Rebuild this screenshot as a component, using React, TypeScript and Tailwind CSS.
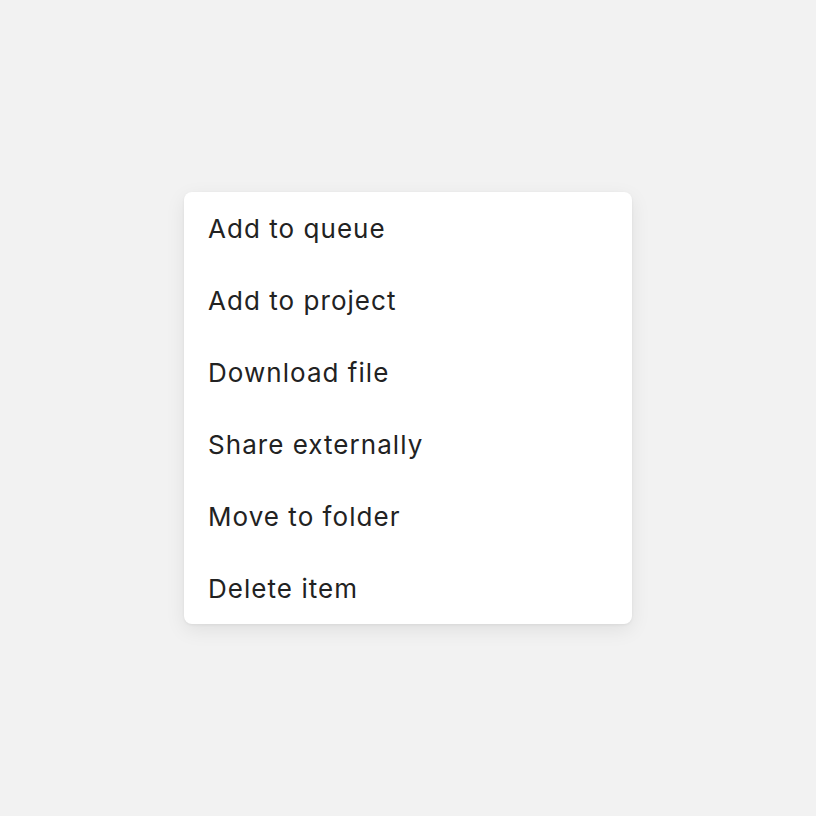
import React from "react";

const items = [
  "Add to queue",
  "Add to project",
  "Download file",
  "Share externally",
  "Move to folder",
  "Delete item",
];

const App: React.FC = () => {
  return (
    <div
      className="w-[816px] h-[816px] bg-[#f2f2f2] flex items-start justify-center pt-[192px]"
      style={{ fontFamily: "Inter, 'Noto Sans', sans-serif" }}
    >
      <ul className="w-[448px] bg-white rounded-lg shadow-[0_6px_20px_rgba(0,0,0,0.08),0_1px_3px_rgba(0,0,0,0.06)]">
        {items.map((label) => (
          <li
            key={label}
            className="h-[72px] flex items-center px-6 text-[26px] tracking-[0.04em] text-[#222222]"
          >
            {label}
          </li>
        ))}
      </ul>
    </div>
  );
};

export default App;
